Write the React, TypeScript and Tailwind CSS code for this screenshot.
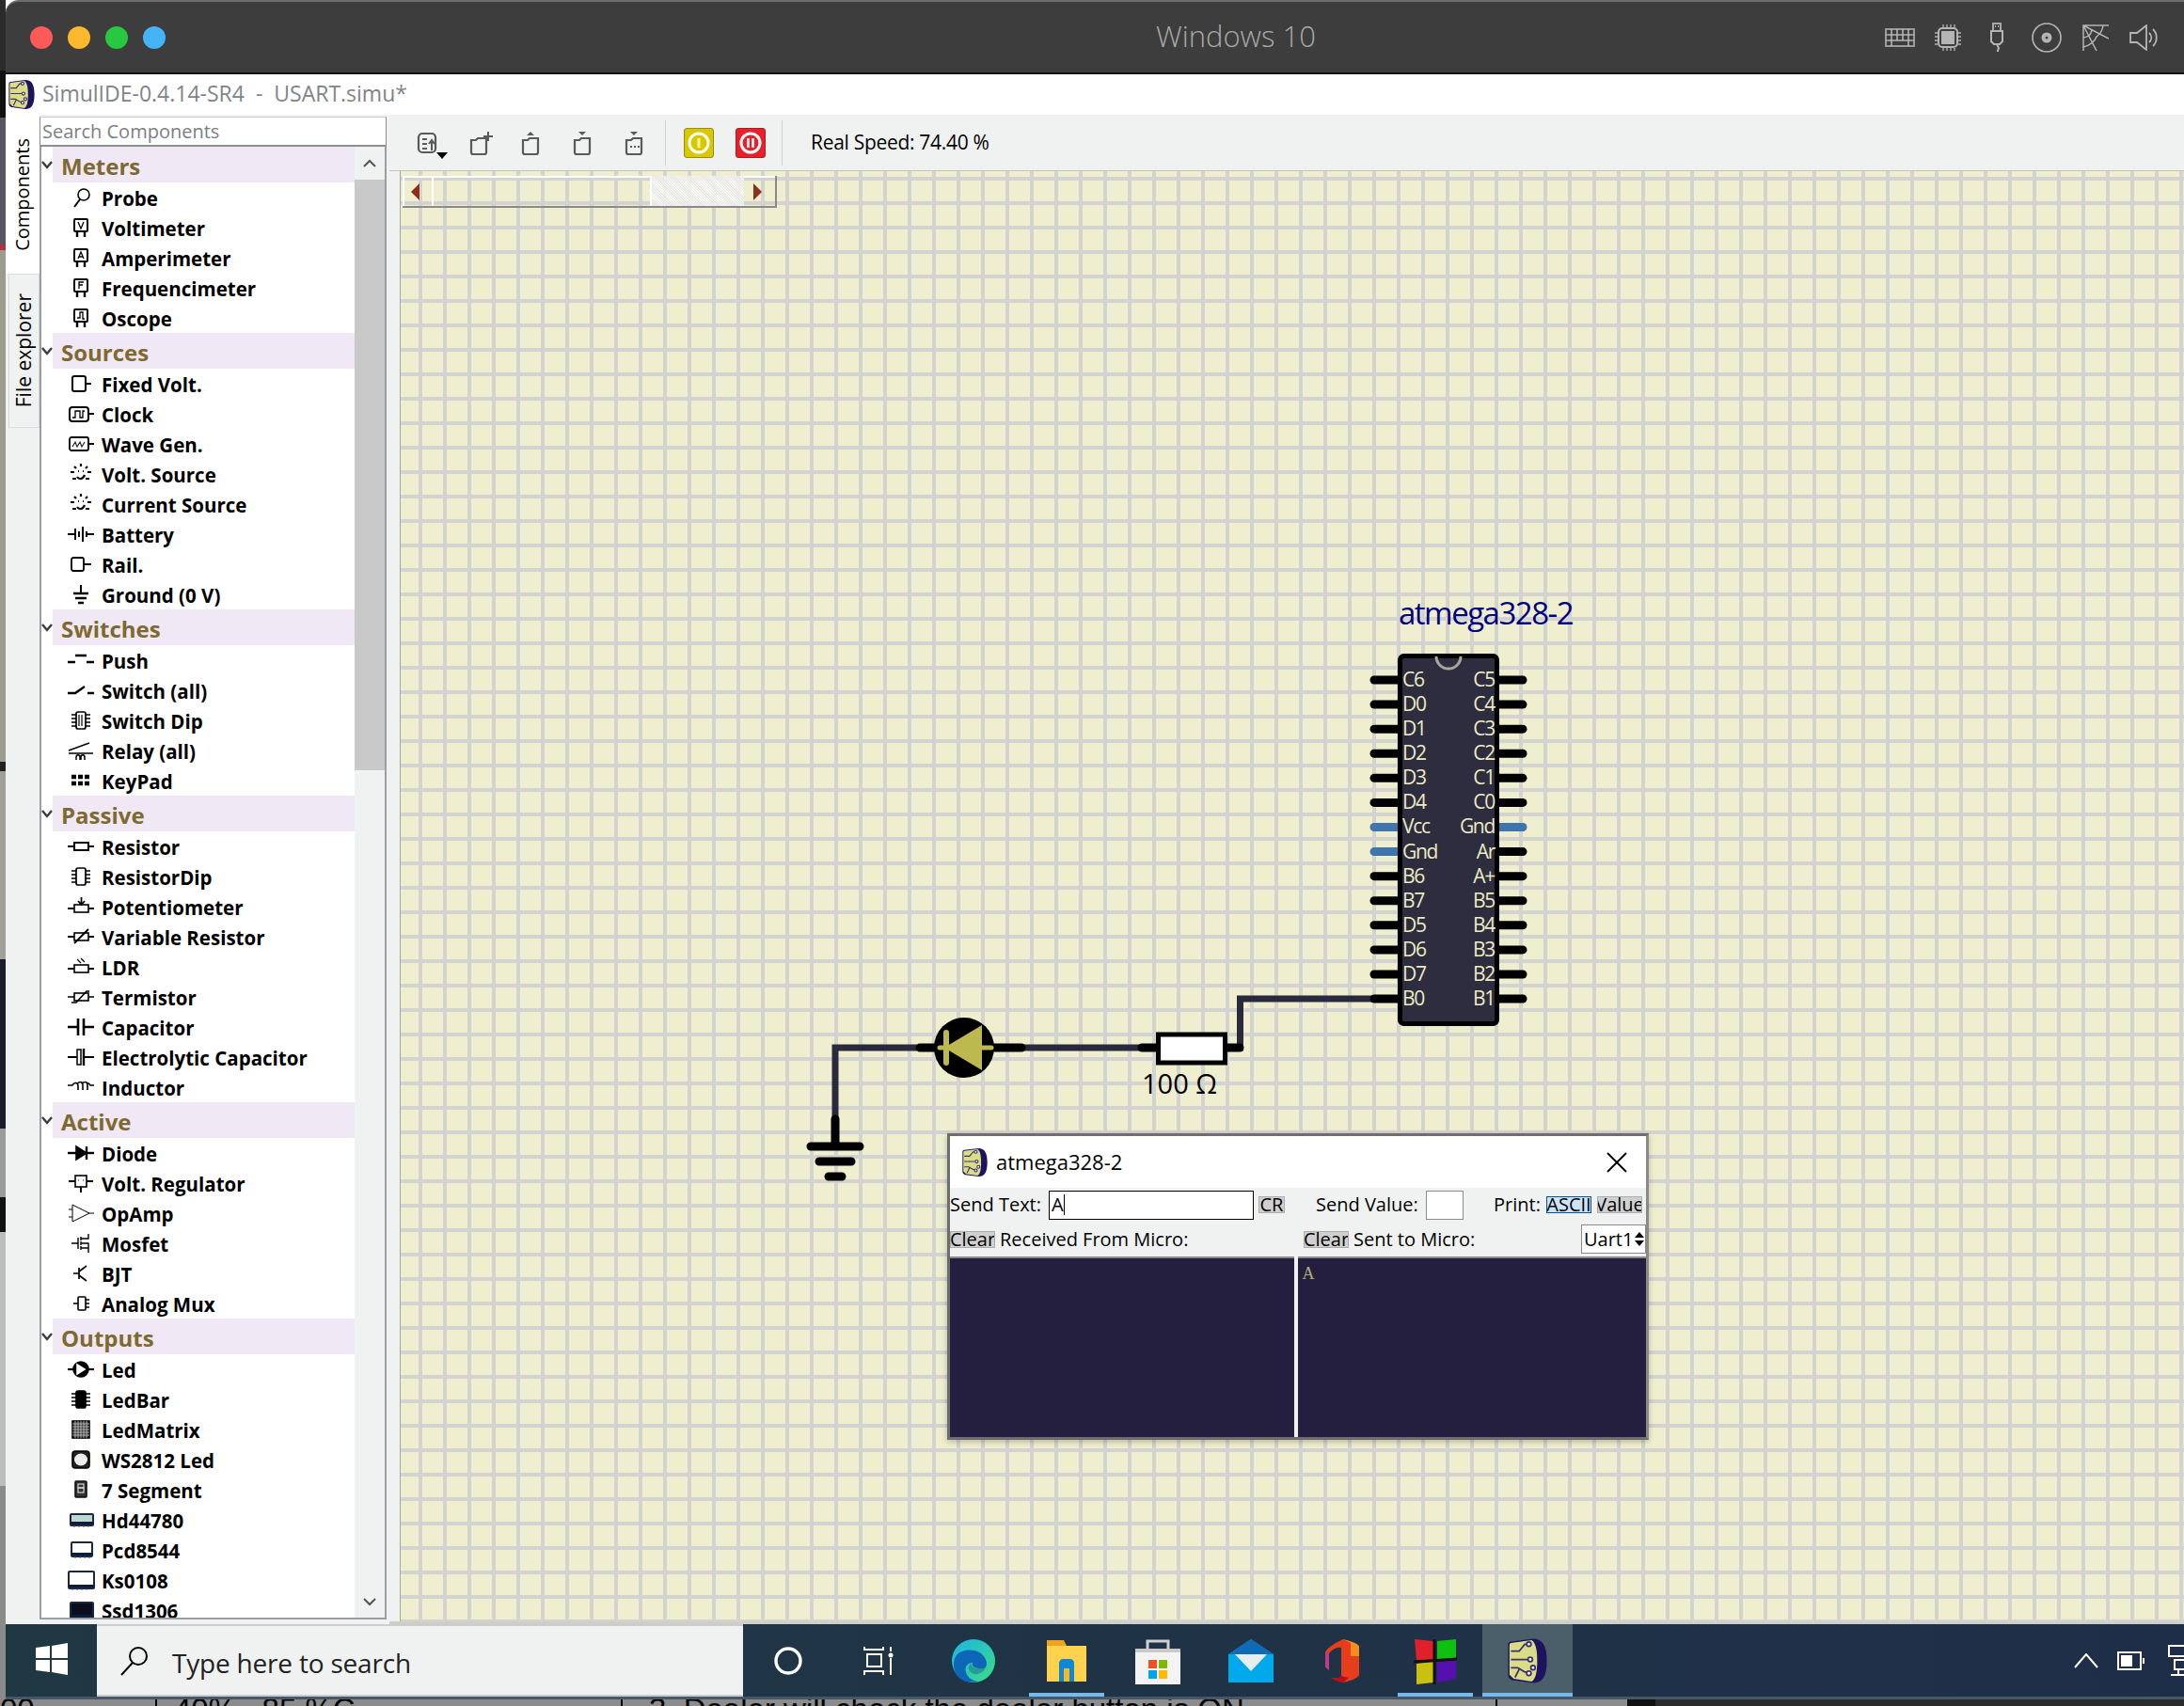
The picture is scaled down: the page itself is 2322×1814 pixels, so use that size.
import React from "react";

const Ico = ({ children, w = 30, h = 22, vb }: { children: React.ReactNode; w?: number; h?: number; vb?: string }) => (
  <svg width={w} height={h} viewBox={vb ?? `0 0 ${w} ${h}`} fill="none" stroke="currentColor" strokeWidth="1.6" className="shrink-0">
    {children}
  </svg>
);

const meter = (l: React.ReactNode) => (
  <Ico>
    <rect x="8" y="2" width="14" height="13" rx="1" strokeWidth="2" />
    <path d="M11 15v6M19 15v6" strokeWidth="2.4" />
    {l}
  </Ico>
);
const pt = (d: string, sw = 1.3) => <path d={d} strokeWidth={sw} />;
const source = (
  <Ico>
    <path d="M8 3l2 2M22 3l-2 2M15 0v3M4 9h4M22 9h4M6 16h4M20 16h4M11 14c2 3 6 3 8-2M12 8h1M17 8h1" strokeWidth="2.2" />
  </Ico>
);
const dip = (inner: React.ReactNode, filled = false) => (
  <Ico>
    <rect x="10" y="2" width="10" height="18" rx="2" fill={filled ? "#000" : "none"} strokeWidth="1.7" />
    <path d="M5 5h5M5 9h5M5 13h5M5 17h5M20 5h5M20 9h5M20 13h5M20 17h5" strokeWidth="1.7" />
    {inner}
  </Ico>
);
const lcd = (fill: string, x = 4, w = 24, y = 4, h = 14) => (
  <Ico>
    <rect x={x} y={y} width={w} height={h} rx="1" fill={fill} stroke="#1c2740" strokeWidth="2" />
    <path d={`M${x} ${y + h - 2.5}h${w}`} stroke="#0d1c3c" strokeWidth="3" />
    <path d={`M${x + 4} ${y + h}v2M${x + 9} ${y + h}v2M${x + 14} ${y + h}v2M${x + 19} ${y + h}v2`} stroke="#555" strokeWidth="1" />
  </Ico>
);

const icons: Record<string, React.ReactNode> = {
  Probe: (
    <Ico>
      <circle cx="18" cy="8" r="6" strokeWidth="1.6" />
      <path d="M14 13L8 21" strokeWidth="2" />
    </Ico>
  ),
  Voltimeter: meter(pt("M12 5l3 7 3-7")),
  Amperimeter: meter(pt("M12 12l3-7 3 7M13 10h4")),
  Frequencimeter: meter(pt("M13 12V5h5M13 8h4")),
  Oscope: meter(pt("M11 11h3V5h3v7h2")),
  "Fixed Volt.": (
    <Ico>
      <rect x="6" y="3" width="14" height="16" rx="2" strokeWidth="2" />
      <path d="M20 11h6" strokeWidth="2" />
    </Ico>
  ),
  Clock: (
    <Ico>
      <rect x="3" y="4" width="20" height="15" rx="3" strokeWidth="2" />
      <path d="M6 15h3V8h5v7h3V8h2" strokeWidth="1.3" />
      <path d="M23 11h6" strokeWidth="2" />
    </Ico>
  ),
  "Wave Gen.": (
    <Ico>
      <rect x="3" y="4" width="20" height="14" rx="2" strokeWidth="1.8" />
      <path d="M6 14l3-5 2 5 3-5 2 5 3-5" strokeWidth="1.2" stroke="#223" />
      <path d="M23 11h6" strokeWidth="2" />
    </Ico>
  ),
  "Volt. Source": source,
  "Current Source": source,
  Battery: (
    <Ico>
      <path d="M1 11h8M9 5v12M13 8v6M17 3v16M21 8v6M21 11h8" strokeWidth="2" />
    </Ico>
  ),
  "Rail.": (
    <Ico>
      <rect x="5" y="4" width="13" height="14" rx="2" strokeWidth="1.8" />
      <path d="M18 11h8" strokeWidth="2" />
    </Ico>
  ),
  "Ground (0 V)": (
    <Ico>
      <path d="M15 1v9" strokeWidth="2" />
      <path d="M7 10h16M9 15h12M12 20h6" strokeWidth="2.4" />
    </Ico>
  ),
  Push: (
    <Ico>
      <path d="M1 13h8M21 13h8M9 6h12" strokeWidth="2.4" />
    </Ico>
  ),
  "Switch (all)": (
    <Ico>
      <path d="M1 14h8L19 7M22 14h7" strokeWidth="2.4" />
    </Ico>
  ),
  "Switch Dip": dip(<path d="M13 5v12M16 5v12" strokeWidth="1.2" />),
  "Relay (all)": (
    <Ico>
      <path d="M2 11L24 3M2 14h26M10 21v-3c0-3 4-3 4 0v3M15 21v-3c0-3 4-3 4 0v3" strokeWidth="1.5" />
    </Ico>
  ),
  KeyPad: (
    <Ico>
      <path d="M5 7h5M12 7h5M19 7h5M5 14h5M12 14h5M19 14h5" strokeWidth="4.5" />
    </Ico>
  ),
  Resistor: (
    <Ico>
      <rect x="8" y="7" width="15" height="8" strokeWidth="2" />
      <path d="M1 11h7M23 11h6" strokeWidth="2.2" />
    </Ico>
  ),
  ResistorDip: dip(null),
  Potentiometer: (
    <Ico>
      <rect x="8" y="9" width="15" height="8" strokeWidth="1.6" />
      <path d="M1 13h7M23 13h6M15.5 1v8M12 5l3.5 4 3.5-4" strokeWidth="1.8" />
    </Ico>
  ),
  "Variable Resistor": (
    <Ico>
      <rect x="8" y="7" width="15" height="8" strokeWidth="1.6" />
      <path d="M1 11h7M23 11h6M8 18L23 3" strokeWidth="1.8" />
    </Ico>
  ),
  LDR: (
    <Ico>
      <rect x="8" y="9" width="15" height="8" strokeWidth="1.6" />
      <path d="M1 13h7M23 13h6" strokeWidth="2" />
      <path d="M11 3l4 4M15 2l4 4" strokeWidth="1.2" />
    </Ico>
  ),
  Termistor: (
    <Ico>
      <rect x="8" y="7" width="15" height="8" strokeWidth="1.6" />
      <path d="M1 11h7M23 11h6M5 17h5L21 5h3" strokeWidth="1.7" />
    </Ico>
  ),
  Capacitor: (
    <Ico>
      <path d="M1 11h11M18 11h11M12 2v18M18 2v18" strokeWidth="2.6" />
    </Ico>
  ),
  "Electrolytic Capacitor": (
    <Ico>
      <path d="M1 11h10M19 11h10" strokeWidth="2" />
      <rect x="11" y="3" width="4" height="16" fill="#fff" strokeWidth="1.5" />
      <path d="M18 2v18" strokeWidth="2.4" />
    </Ico>
  ),
  Inductor: (
    <Ico>
      <path d="M1 9h5c2-4 6-3 6 1v4M11 8c2-4 6-3 6 1v5M16 8c2-4 6-3 6 1v5M21 7c1-1 3 0 4 2h4" strokeWidth="1.6" />
    </Ico>
  ),
  Diode: (
    <Ico>
      <path d="M1 11h28" strokeWidth="2.4" />
      <path d="M10 4l11 7-11 7z" fill="currentColor" />
      <path d="M21 4v14" strokeWidth="2.4" />
    </Ico>
  ),
  "Volt. Regulator": (
    <Ico>
      <rect x="9" y="3" width="12" height="12" strokeWidth="1.6" />
      <path d="M2 9h7M21 9h7M15 15v6" strokeWidth="2" />
      <path d="M12 8h1M17 8h1" strokeWidth="1" />
    </Ico>
  ),
  OpAmp: (
    <Ico>
      <path d="M6 2l18 9-18 9zM2 7h4M2 15h4M24 11h5" strokeWidth="1" />
    </Ico>
  ),
  Mosfet: (
    <Ico>
      <path d="M5 11h7M12 5v12M15 4v4M15 9v4M15 14v4M15 6h8V1M15 16h8v5M15 11h8v5" strokeWidth="1.4" />
    </Ico>
  ),
  BJT: (
    <Ico>
      <path d="M7 11h6M13 5v12M13 9l8-6M13 13l8 6" strokeWidth="1.7" />
    </Ico>
  ),
  "Analog Mux": (
    <Ico>
      <path d="M7 11h5" strokeWidth="1.6" />
      <rect x="12" y="4" width="8" height="14" rx="1" strokeWidth="1.6" />
      <path d="M20 7h4M20 11h4M20 15h4" strokeWidth="1.4" />
    </Ico>
  ),
  Led: (
    <Ico>
      <circle cx="15" cy="11" r="8" fill="currentColor" />
      <path d="M1 11h28" strokeWidth="2.2" />
      <path d="M11 6l8 5-8 5z" fill="#fff" stroke="#fff" />
    </Ico>
  ),
  LedBar: dip(null, true),
  LedMatrix: (
    <Ico>
      <rect x="6" y="2" width="18" height="18" fill="#333" stroke="#000" />
      <path d="M9 2v18M12 2v18M15 2v18M18 2v18M21 2v18M6 5h18M6 8h18M6 11h18M6 14h18M6 17h18" stroke="#ccc" strokeWidth="0.8" />
    </Ico>
  ),
  "WS2812 Led": (
    <Ico>
      <rect x="6" y="2" width="18" height="18" rx="3" fill="#222" stroke="#000" />
      <ellipse cx="15" cy="11" rx="7" ry="6.5" fill="#ededed" stroke="none" />
    </Ico>
  ),
  "7 Segment": (
    <Ico>
      <rect x="9" y="2" width="12" height="17" rx="1" fill="#333" stroke="#111" />
      <rect x="12" y="5" width="6" height="4" stroke="#ddd" strokeWidth="1.1" />
      <rect x="12" y="9" width="6" height="5" stroke="#ddd" strokeWidth="1.1" />
    </Ico>
  ),
  Hd44780: lcd("#bcd8d0", 4, 24, 5, 12),
  Pcd8544: lcd("#fff", 5, 22, 3, 15),
  Ks0108: lcd("#fff", 2, 27, 2, 18),
  Ssd1306: lcd("#0d0d20", 4, 24, 3, 17),
};

const tree: { name: string; items: string[] }[] = [
  { name: "Meters", items: ["Probe", "Voltimeter", "Amperimeter", "Frequencimeter", "Oscope"] },
  { name: "Sources", items: ["Fixed Volt.", "Clock", "Wave Gen.", "Volt. Source", "Current Source", "Battery", "Rail.", "Ground (0 V)"] },
  { name: "Switches", items: ["Push", "Switch (all)", "Switch Dip", "Relay (all)", "KeyPad"] },
  { name: "Passive", items: ["Resistor", "ResistorDip", "Potentiometer", "Variable Resistor", "LDR", "Termistor", "Capacitor", "Electrolytic Capacitor", "Inductor"] },
  { name: "Active", items: ["Diode", "Volt. Regulator", "OpAmp", "Mosfet", "BJT", "Analog Mux"] },
  { name: "Outputs", items: ["Led", "LedBar", "LedMatrix", "WS2812 Led", "7 Segment", "Hd44780", "Pcd8544", "Ks0108", "Ssd1306"] },
];

const AppIcon = ({ w = 30, h = 34 }: { w?: number; h?: number }) => (
  <svg width={w} height={h} viewBox="0 0 30 34" className="shrink-0">
    <path d="M3 3l16-2c7 0 10 5 10 16s-3 16-10 16L4 31c-2-1-3-2-3-4V5c0-1 1-2 2-2z" fill="#1d1460" />
    <path d="M3 4l15-2c3 2 4 7 4 15s-1 13-4 15L5 30l-3-3V5z" fill="#dbdc86" />
    <g stroke="#3b3070" strokeWidth="1.2" fill="#fff">
      <path d="M3 10h6l4-5h2M3 16h12M3 22l5 0 5 3h3M6 29l3-6" fill="none" />
      <circle cx="16" cy="5" r="1.6" />
      <circle cx="17" cy="16" r="1.6" />
      <circle cx="19" cy="22" r="1.6" />
      <circle cx="16" cy="26" r="1.6" />
    </g>
  </svg>
);

const Chevron = () => (
  <svg width="12" height="10" viewBox="0 0 12 10" className="shrink-0">
    <path d="M1 2l5 6 5-6" fill="none" stroke="#3b3b3b" strokeWidth="2.4" />
  </svg>
);

const Sidebar = () => (
  <div className="w-[408px] shrink-0 flex bg-[#f0f2f1] pb-[5px]">
    <div className="w-[36px] shrink-0 flex flex-col">
      <div className="h-[169px] bg-white flex items-center justify-center">
        <span className="[writing-mode:vertical-rl] rotate-180 text-[20px] leading-none text-black font-['Open_Sans',sans-serif]">Components</span>
      </div>
      <div className="h-[164px] ml-[3px] border border-[#d9dbda] flex items-center justify-center">
        <span className="[writing-mode:vertical-rl] rotate-180 text-[21px] leading-none text-black font-['Open_Sans',sans-serif]">File explorer</span>
      </div>
    </div>
    <div className="w-[369px] flex flex-col pt-[2px]">
      <div className="h-[32px] shrink-0 bg-white border-x border-t border-b-2 border-[#8d8f90] border-t-[#c9c9c9] px-[2px] flex items-center text-[20px] text-[#7b7f82] font-['Open_Sans',sans-serif]">
        Search Components
      </div>
      <div className="flex-1 min-h-0 flex border-x-2 border-b-2 border-[#9a9da3] bg-white overflow-hidden">
        <div className="w-[333px] shrink-0 overflow-hidden font-['Open_Sans',sans-serif]">
          {tree.map((g) => (
            <div key={g.name}>
              <div className="h-[38px] flex items-center">
                <div className="w-[12px] flex justify-center">
                  <Chevron />
                </div>
                <div className="w-[321px] h-full bg-[#f0e8f4] pl-[9px] pt-[3px] flex items-center text-[24px] leading-none font-bold text-[#7e6a30]">{g.name}</div>
              </div>
              {g.items.map((it) => (
                <div key={it} className="h-8 flex items-center pl-[27px] gap-[7px] text-[20.5px] leading-none font-bold text-black">
                  <span className="flex w-[30px] justify-center text-black">{icons[it]}</span>
                  <span className="pt-[2px]">{it}</span>
                </div>
              ))}
            </div>
          ))}
        </div>
        <div className="flex-1 flex flex-col bg-[#f0f2f1]">
          <div className="h-[35px] flex items-center justify-center shrink-0">
            <svg width="14" height="10" viewBox="0 0 14 10">
              <path d="M1 8l6-6 6 6" fill="none" stroke="#555" strokeWidth="2" />
            </svg>
          </div>
          <div className="h-[628px] bg-[#c9c9c9] shrink-0" />
          <div className="flex-1 flex items-end justify-center pb-[12px]">
            <svg width="14" height="10" viewBox="0 0 14 10">
              <path d="M1 2l6 6 6-6" fill="none" stroke="#555" strokeWidth="2" />
            </svg>
          </div>
        </div>
      </div>
    </div>
  </div>
);

const ToolIcon = ({ children }: { children: React.ReactNode }) => (
  <svg width="30" height="32" viewBox="0 0 30 32" fill="none" stroke="#5a5a5a" strokeWidth="2.2" className="shrink-0">
    {children}
  </svg>
);

const folder = "M7 13h5l2-2h9v15a2 2 0 0 1-2 2H9a2 2 0 0 1-2-2z";

const PowerBtn = ({ red }: { red?: boolean }) => (
  <div className={`w-[32px] h-[32px] rounded-[3px] flex items-center justify-center border ${red ? "bg-[#e8202c] border-[#b01a24]" : "bg-[#d8c800] border-[#9a8c10]"}`}>
    <svg width="26" height="26" viewBox="0 0 26 26" fill="none" stroke="#fff" strokeWidth="3">
      <circle cx="13" cy="13" r="10" />
      {red ? <path d="M10.5 8v10M15.5 8v10" strokeWidth="2.6" /> : <path d="M13 8v10" stroke="#fff6a0" strokeWidth="3" />}
    </svg>
  </div>
);

const Toolbar = () => (
  <div className="h-[60px] shrink-0 bg-[#f0f2f1] flex items-center pl-[26px] border-b border-[#c4c4b8]">
    <div className="relative w-[44px]">
      <ToolIcon>
        <rect x="5" y="6" width="18" height="20" rx="4" />
        <path d="M9 12h5M9 17h5M9 22h5" strokeWidth="1.8" />
        <path d="M19 24v-9M16 17l3-4 3 4" strokeWidth="2" />
      </ToolIcon>
      <svg width="14" height="8" viewBox="0 0 14 8" className="absolute left-[23px] top-[26px]">
        <path d="M1 0h12L7 7z" fill="#000" />
      </svg>
    </div>
    <div className="flex gap-[25px] ml-[10px]">
      <ToolIcon>
        <path d={folder} />
        <path d="M25 4v10M20 9h10" strokeWidth="2" />
      </ToolIcon>
      <ToolIcon>
        <path d={folder} />
        <path d="M11 8l4-4 4 4z" fill="#5a5a5a" stroke="none" />
      </ToolIcon>
      <ToolIcon>
        <path d={folder} />
        <path d="M11 4l4 4 4-4z" fill="#5a5a5a" stroke="none" />
      </ToolIcon>
      <ToolIcon>
        <path d={folder} />
        <path d="M11 4l4 4 4-4z" fill="#5a5a5a" stroke="none" />
        <path d="M11 20h2M15 20h2M19 20h2" strokeWidth="2.2" />
      </ToolIcon>
    </div>
    <div className="w-px h-[48px] bg-[#cfd0cf] ml-[18px]" />
    <div className="ml-[19px] flex gap-[23px]">
      <PowerBtn />
      <PowerBtn red />
    </div>
    <div className="w-px h-[48px] bg-[#cfd0cf] ml-[17px]" />
    <span className="ml-[30px] text-[21px] text-black font-['Open_Sans',sans-serif] tracking-[-0.3px]">Real Speed: 74.40 %</span>
  </div>
);

const leftPins = ["C6", "D0", "D1", "D2", "D3", "D4", "Vcc", "Gnd", "B6", "B7", "D5", "D6", "D7", "B0"];
const rightPins = ["C5", "C4", "C3", "C2", "C1", "C0", "Gnd", "Ar", "A+", "B5", "B4", "B3", "B2", "B1"];

const Schematic = () => (
  <svg className="absolute inset-0" width="1897" height="1543" viewBox="426 182 1897 1543" fill="none">
    <path d="M1460 1062H1318.5V1114H1308M1212 1114H1060M975 1114H888V1195" stroke="#2a2a3e" strokeWidth="7" strokeLinejoin="miter" />
    <path d="M888 1190v26" stroke="#000" strokeWidth="9" strokeLinecap="round" />
    <path d="M862 1219h52M871 1235h34M881 1251h14" stroke="#000" strokeWidth="9" strokeLinecap="round" />
    <path d="M978 1114h20M1052 1114h34" stroke="#000" strokeWidth="9" strokeLinecap="round" />
    <circle cx="1025" cy="1114" r="32" fill="#000" />
    <path d="M1004 1114l40-24v48z" fill="#bcb94e" />
    <path d="M999 1114h55" stroke="#bcb94e" strokeWidth="5" strokeLinecap="round" />
    <path d="M1006 1098v32" stroke="#bcb94e" strokeWidth="6" strokeLinecap="round" />
    <path d="M1214 1114h16M1304 1114h14" stroke="#000" strokeWidth="9" strokeLinecap="round" />
    <rect x="1231.5" y="1100" width="71" height="30" fill="#fff" stroke="#000" strokeWidth="5" />
    <text x="1214" y="1163" fill="#000" fontSize="29" fontFamily="'Open Sans',sans-serif">100 Ω</text>
    <text x="1487" y="664" fill="#000080" fontSize="33" letterSpacing="-1.5" fontFamily="'Open Sans',sans-serif">atmega328-2</text>
    {leftPins.map((p, i) => (
      <path key={"l" + i} d={`M1461 ${723 + i * 26.08}h26`} stroke={p === "Vcc" || p === "Gnd" ? "#3f74ad" : "#000"} strokeWidth="9" strokeLinecap="round" />
    ))}
    {rightPins.map((p, i) => (
      <path key={"r" + i} d={`M1593 ${723 + i * 26.08}h26`} stroke={p === "Gnd" ? "#3f74ad" : "#000"} strokeWidth="9" strokeLinecap="round" />
    ))}
    <rect x="1488.5" y="697.5" width="103" height="391" rx="4" fill="#2e2d40" stroke="#000" strokeWidth="5" />
    <path d="M1527 698a13 13 0 0 0 26 0" stroke="#a8a79c" strokeWidth="3" />
    {leftPins.map((p, i) => (
      <text key={p + i} x="1491" y={730 + i * 26.08} fill="#ecebc0" fontSize="21" letterSpacing="-1.3" fontFamily="'Open Sans',sans-serif">{p}</text>
    ))}
    {rightPins.map((p, i) => (
      <text key={p + i} x="1589" y={730 + i * 26.08} textAnchor="end" fill="#ecebc0" fontSize="21" letterSpacing="-1.3" fontFamily="'Open Sans',sans-serif">{p}</text>
    ))}
  </svg>
);

const HScroll = () => (
  <div className="absolute left-[2px] top-[5px] w-[398px] h-[34px] flex border-r-2 border-b-2 border-[#8a8a8a]">
    <div className="w-[33px] border-t-2 border-l-2 border-r-2 border-[#fff] flex items-center justify-center pr-[5px]">
      <svg width="10" height="18" viewBox="0 0 10 18">
        <path d="M9 0v18L0 9z" fill="#8c2f1b" />
      </svg>
    </div>
    <div className="w-[232px] border-t-2 border-[#fff] border-r-2" />
    <div className="w-[98px] bg-[#ffffff]/70 bg-[repeating-linear-gradient(45deg,#e8e8e8_0,#e8e8e8_1px,transparent_1px,transparent_2px)]" />
    <div className="flex-1 border-t-2 border-[#fff] flex items-center justify-center pr-[5px]">
      <svg width="10" height="18" viewBox="0 0 10 18">
        <path d="M1 0v18L10 9z" fill="#8c2f1b" />
      </svg>
    </div>
  </div>
);

const MiniBtn = ({ w, label, active }: { w: string; label: string; active?: boolean }) => (
  <div className={`${w} h-[18px] shrink-0 overflow-hidden flex items-center justify-center border text-[20px] leading-none ${active ? "bg-[#cce4f7] border-[#005499]" : "bg-[#d0d0d0] border-[#adadad]"}`}>
    <span className="whitespace-nowrap">{label}</span>
  </div>
);

const Dialog = () => (
  <div className="absolute left-[581px] top-[1023px] w-[746px] h-[326px] bg-[#f0f2f1] border-[3px] border-[#6e6e6e] border-r-[#8a8a8a] flex flex-col font-['Open_Sans',sans-serif] text-black shadow-[0_2px_6px_rgba(0,0,0,0.25)]">
    <div className="h-[55px] shrink-0 bg-white flex items-center pl-[12px] pr-[20px]">
      <AppIcon w={29} h={32} />
      <span className="ml-[8px] text-[22px]">atmega328-2</span>
      <svg className="ml-auto" width="22" height="22" viewBox="0 0 22 22">
        <path d="M1 1l20 20M21 1L1 21" stroke="#000" strokeWidth="1.8" />
      </svg>
    </div>
    <div className="h-[36px] shrink-0 flex items-center text-[20px]">
      <span className="w-[105px]">Send Text:</span>
      <div className="w-[218px] h-[31px] bg-white border border-black pl-[2px] flex items-center">
        A<span className="w-px h-[22px] bg-black" />
      </div>
      <div className="ml-[5px]">
        <MiniBtn w="w-[28px]" label="CR" />
      </div>
      <span className="ml-[33px] w-[117px] whitespace-nowrap">Send Value:</span>
      <div className="w-[40px] h-[31px] bg-white border border-[#8a8a8a]" />
      <span className="ml-[32px] w-[56px]">Print:</span>
      <MiniBtn w="w-[48px]" label="ASCII" active />
      <div className="ml-[6px]">
        <MiniBtn w="w-[48px]" label="Value" />
      </div>
    </div>
    <div className="h-[37px] shrink-0 flex items-center text-[20px]">
      <MiniBtn w="w-[48px]" label="Clear" />
      <span className="ml-[5px] w-[323px]">Received From Micro:</span>
      <MiniBtn w="w-[48px]" label="Clear" />
      <span className="ml-[5px]">Sent to Micro:</span>
      <div className="ml-auto w-[69px] h-[31px] bg-white border border-[#8a8a8a] flex items-center pl-[2px] overflow-hidden">
        <span className="w-[52px] shrink-0 overflow-hidden">Uart1</span>
        <div className="flex flex-col gap-[3px] w-[14px] items-center">
          <svg width="10" height="6" viewBox="0 0 10 6"><path d="M5 0l5 6H0z" fill="#000" /></svg>
          <svg width="10" height="6" viewBox="0 0 10 6"><path d="M0 0h10L5 6z" fill="#000" /></svg>
        </div>
      </div>
    </div>
    <div className="flex-1 flex gap-[4px]">
      <div className="flex-1 bg-[#241f3f] border-t-2 border-[#8a8a8a]" />
      <div className="flex-1 bg-[#241f3f] border-t-2 border-[#8a8a8a] pl-[5px] pt-[4px] text-[18px] leading-[24px] text-[#b4ac7e] font-['Liberation_Serif',serif]">A</div>
    </div>
  </div>
);

const Canvas = () => (
  <div className="relative flex-1 min-h-0 ml-[11px] overflow-hidden border-l border-[#a8a89a] bg-[#efefcf] bg-[linear-gradient(#d3d3cf_4px,transparent_4px),linear-gradient(90deg,#d3d3cf_4px,transparent_4px)] [background-size:26px_26px] [background-position:19px_6px]">
    <HScroll />
    <Schematic />
    <Dialog />
  </div>
);

const TopIcons = () => (
  <div className="ml-auto pr-[26px] flex items-center text-[#b4b4b4]">
    <svg width="32" height="20" viewBox="0 0 32 20" fill="none" stroke="currentColor" strokeWidth="1.6">
      <rect x="1" y="1" width="30" height="18" />
      <path d="M1 7h30M1 13h30M7 1v12M13 1v12M19 1v12M25 1v18M7 13v6" />
    </svg>
    <svg className="ml-[21px]" width="28" height="28" viewBox="0 0 28 28" fill="none" stroke="currentColor">
      <rect x="4" y="4" width="20" height="20" rx="4" strokeWidth="2" />
      <rect x="7" y="7" width="14" height="14" fill="currentColor" stroke="none" />
      <path d="M9 0v3M13 0v3M17 0v3M21 0v3M9 25v3M13 25v3M17 25v3M21 25v3M0 9h3M0 13h3M0 17h3M0 21h3M25 9h3M25 13h3M25 17h3M25 21h3" strokeWidth="1.3" />
    </svg>
    <svg className="ml-[31px]" width="14" height="32" viewBox="0 0 14 32" fill="none" stroke="currentColor" strokeWidth="1.8">
      <rect x="3" y="1" width="8" height="8" />
      <path d="M5 4h1M8 4h1" />
      <path d="M1 9h12v11l-3 3H4l-3-3zM7 23l2 4-1 3v1" strokeWidth="2" />
    </svg>
    <svg className="ml-[30px]" width="32" height="32" viewBox="0 0 32 32" fill="none" stroke="currentColor" strokeWidth="1.6">
      <circle cx="16" cy="16" r="15" />
      <circle cx="16" cy="16" r="3.5" strokeWidth="4" />
    </svg>
    <svg className="ml-[22px]" width="28" height="28" viewBox="0 0 28 28" fill="none" stroke="currentColor" strokeWidth="1.5">
      <path d="M1 28V1h27M1 1l14 27M1 1l27 14M1 14c6-1 8-3 9-8M1 24c8-2 12-6 14-11 3-2 6-5 7-12" />
    </svg>
    <svg className="ml-[22px]" width="32" height="28" viewBox="0 0 32 28" fill="none" stroke="currentColor" strokeWidth="1.8">
      <path d="M1 9h7l10-8v26L8 19H1z" />
      <path d="M21 9c3 3 3 7 0 10M25 5c5 5 5 13 0 18" />
    </svg>
  </div>
);

const TaskIcon = ({ children, className }: { children: React.ReactNode; className: string }) => (
  <div className={`h-full flex items-center justify-center shrink-0 ${className}`}>{children}</div>
);

const Taskbar = () => (
  <div className="h-[80px] shrink-0 flex bg-linear-to-r from-[#203843] to-[#1e2e48] border-b-[3px] border-[#45586a]">
    <div className="w-[97px] shrink-0 flex items-center justify-center pb-[4px]">
      <svg width="34" height="34" viewBox="0 0 34 34">
        <path d="M0 5l15-2v13H0zM17 3l17-3v16H17zM0 18h15v13l-15-2zM17 18h17v16l-17-3z" fill="#fff" />
      </svg>
    </div>
    <div className="w-[687px] shrink-0 h-full bg-[#f0f2f1] border-t-2 border-b-2 border-[#cccccc] flex items-center">
      <svg className="ml-[24px]" width="32" height="32" viewBox="0 0 32 32" fill="none" stroke="#000" strokeWidth="2">
        <circle cx="20" cy="11" r="9" />
        <path d="M14 18L2 31" />
      </svg>
      <span className="ml-[24px] pt-[5px] text-[28px] leading-none text-[#222] font-['Open_Sans',sans-serif] tracking-[-0.2px]">Type here to search</span>
    </div>
    <TaskIcon className="w-[96px]">
      <svg width="32" height="32" viewBox="0 0 32 32"><circle cx="16" cy="16" r="13" fill="none" stroke="#fff" strokeWidth="3.4" /></svg>
    </TaskIcon>
    <TaskIcon className="w-[96px]">
      <svg width="32" height="32" viewBox="0 0 32 32" fill="none" stroke="#fff" strokeWidth="2">
        <path d="M1 1v3h20V1M4 9h15v13H4zM1 31v-4h20v4M29 1v5M29 13v18" />
        <circle cx="29" cy="10" r="2.5" fill="#fff" stroke="none" />
      </svg>
    </TaskIcon>
    <TaskIcon className="w-[106px]">
      <svg width="48" height="48" viewBox="0 0 48 48">
        <defs>
          <linearGradient id="edgeA" x1="0" y1="0" x2="1" y2="1"><stop offset="0" stopColor="#1cb4e8" /><stop offset="1" stopColor="#3ddc84" /></linearGradient>
        </defs>
        <circle cx="24" cy="24" r="23" fill="url(#edgeA)" />
        <path d="M3 28C3 14 15 11 25 13c9 2 13 9 13 14 0 4-4 6-9 5-5-1-7-3-6-6-5 0-9 4-7 10 1 5 6 9 13 10C12 49 3 40 3 28z" fill="#0d66b8" />
        <path d="M22 26c-1 3 1 5 6 6 5 1 9-1 10-4-1 7-8 11-13 10-7-2-8-8-3-12z" fill="#1b3a6e" opacity="0.35" />
      </svg>
    </TaskIcon>
    <TaskIcon className="w-[92px] relative">
      <svg width="44" height="48" viewBox="0 0 44 48">
        <path d="M1 8V2h18l3 6z" fill="#eda41c" />
        <path d="M1 8h42v38H1z" fill="#ffd24d" />
        <path d="M14 46V26c0-2 2-4 4-4h8c2 0 4 2 4 4v20h-5V32h-6v14z" fill="#0f86d6" />
        <path d="M19 32h6v14h-6z" fill="#f9b815" />
      </svg>
      <span className="absolute left-[6px] right-[6px] bottom-0 h-[4px] bg-[#76b9ed]" />
    </TaskIcon>
    <TaskIcon className="w-[102px]">
      <svg width="48" height="50" viewBox="0 0 48 50">
        <path d="M13 14V4h22v10" fill="none" stroke="#cfcfcf" strokeWidth="3" />
        <path d="M0 12h48v38H0z" fill="#f3f3f3" />
        <path d="M0 12h48v4H0z" fill="#c9c9c9" />
        <path d="M14 24h9v9h-9z" fill="#f25022" /><path d="M25 24h9v9h-9z" fill="#7fba00" /><path d="M14 35h9v9h-9z" fill="#00a4ef" /><path d="M25 35h9v9h-9z" fill="#ffb900" />
      </svg>
    </TaskIcon>
    <TaskIcon className="w-[96px]">
      <svg width="48" height="46" viewBox="0 0 48 46">
        <path d="M0 16L24 0l24 16v30H0z" fill="#00a8ec" />
        <path d="M0 16L24 0l24 16-24 0z" fill="#0f6ab8" />
        <path d="M7 16h34L24 34z" fill="#e8eef0" />
      </svg>
    </TaskIcon>
    <TaskIcon className="w-[98px]">
      <svg width="38" height="48" viewBox="0 0 38 48">
        <path d="M20 1c10 3 17 5 17 8v30c-1 3-8 6-17 8-8-2-11-4-13-5 4 1 9 1 11-2V10C14 9 8 12 5 16v18c-2-3-4-2-4-5V15C4 9 12 5 20 1z" fill="#e63d1c" />
        <path d="M5 16v18c-2-3-4-2-4-5V15z" fill="#c3398e" />
        <path d="M20 1c10 3 17 5 17 8v10H28V5z" fill="#f48e1c" />
        <path d="M7 42c4 1 9 1 11-2l8 2-6 5c-8-2-11-4-13-5z" fill="#bb0c20" />
      </svg>
    </TaskIcon>
    <TaskIcon className="w-[100px] relative">
      <svg width="46" height="50" viewBox="0 0 46 50">
        <path d="M1 2l20 2v20H3z" fill="#e0202a" /><path d="M25 4l20-2v20l-20 2z" fill="#10c010" />
        <path d="M3 28l18-2v22L3 50z" fill="#c9c010" /><path d="M25 26l20-2v20l-20 4z" fill="#5510b0" />
        <path d="M22 2v48M0 26l46-3" stroke="#111" strokeWidth="3" />
      </svg>
      <span className="absolute left-[10px] right-[10px] bottom-0 h-[4px] bg-[#76b9ed]" />
    </TaskIcon>
    <TaskIcon className="w-[96px] relative bg-[#4b5f6b]">
      <AppIcon w={46} h={50} />
      <span className="absolute left-0 right-0 bottom-0 h-[4px] bg-[#76b9ed]" />
    </TaskIcon>
    <div className="ml-auto flex items-center pr-0 overflow-hidden">
      <svg width="26" height="16" viewBox="0 0 26 16" fill="none" stroke="#fff" strokeWidth="2"><path d="M1 15L13 1l12 14" /></svg>
      <svg className="ml-[20px]" width="30" height="20" viewBox="0 0 30 20" fill="none" stroke="#fff" strokeWidth="2">
        <rect x="1" y="1" width="24" height="18" />
        <rect x="4" y="4" width="12" height="12" fill="#fff" stroke="none" />
        <path d="M28 7v6" />
      </svg>
      <svg className="ml-[24px]" width="17" height="34" viewBox="0 0 17 34" fill="none" stroke="#fff" strokeWidth="2">
        <rect x="1" y="1" width="20" height="11" />
        <rect x="7" y="16" width="20" height="10" />
        <path d="M11 26v6M3 32h14" />
      </svg>
    </div>
  </div>
);

export default function App() {
  return (
    <div className="w-[2322px] h-[1814px] overflow-hidden flex flex-col bg-[#111] font-['Open_Sans',sans-serif]">
      <div className="flex h-[1807px] shrink-0">
        <div className="w-[6px] shrink-0 flex flex-col">
          <div className="h-[75px] bg-[#2b2b2b]" />
          <div className="h-[50px] bg-[#111]" />
          <div className="h-[135px] bg-[#56565f]" />
          <div className="h-[6px] bg-[#b03040]" />
          <div className="h-[544px] bg-[#9c9c8c]" />
          <div className="h-[10px] bg-[#222]" />
          <div className="h-[200px] bg-[#a0a098]" />
          <div className="h-[180px] bg-[#1b1b2e]" />
          <div className="h-[73px] bg-[#9a9a9a]" />
          <div className="h-[37px] bg-[#111]" />
          <div className="h-[270px] bg-[#bcbcbc]" />
          <div className="flex-1 bg-[#8a8a8a]" />
        </div>
        <div className="flex-1 min-w-0 flex flex-col bg-white">
          <div className="h-[79px] shrink-0 bg-[#3d3d3d] rounded-tl-[14px] border-t-2 border-[#6d6d6d] border-b-2 border-b-[#111] flex items-center">
            <div className="w-[1223px] shrink-0 flex items-center gap-[16px] pl-[26px]">
              <span className="w-[24px] h-[24px] rounded-full bg-[#fc5b57]" />
              <span className="w-[24px] h-[24px] rounded-full bg-[#fdb92d]" />
              <span className="w-[24px] h-[24px] rounded-full bg-[#28c840]" />
              <span className="w-[24px] h-[24px] rounded-full bg-[#45b4f6]" />
            </div>
            <span className="pb-[2px] text-[31px] leading-none font-light text-[#a8a8a8] font-['Open_Sans',sans-serif]">Windows 10</span>
            <TopIcons />
          </div>
          <div className="h-[43px] shrink-0 flex items-center pl-[2px] bg-white">
            <AppIcon w={30} h={33} />
            <span className="ml-[7px] pb-[2px] text-[23px] leading-none text-[#7e848a] whitespace-pre font-['Open_Sans',sans-serif]">SimulIDE-0.4.14-SR4  -  USART.simu*</span>
          </div>
          <div className="flex-1 min-h-0 flex">
            <Sidebar />
            <div className="flex-1 min-w-0 flex flex-col bg-[#f0f2f1]">
              <Toolbar />
              <Canvas />
              <div className="h-[3px] shrink-0 bg-[#cfcfca]" />
            </div>
          </div>
          <Taskbar />
        </div>
      </div>
      <div className="h-[7px] shrink-0 flex overflow-hidden text-[33px] leading-[40px] text-black font-['Liberation_Sans',sans-serif] whitespace-pre">
        <div className="w-[165px] shrink-0 bg-[#8c8c8c] overflow-hidden"><span className="block -translate-y-[9px]">00</span></div>
        <div className="w-[495px] shrink-0 bg-[#8c8c8c] border-l-2 border-black pl-[18px] overflow-hidden"><span className="block -translate-y-[9px]">40%   85 %C</span></div>
        <div className="w-[930px] shrink-0 bg-[#8c8c8c] border-l-2 border-black pl-[28px] overflow-hidden"><span className="block -translate-y-[9px]">3. Dealer will check the dealer button is ON.</span></div>
        <div className="w-[140px] shrink-0 bg-[#8c8c8c] border-l-2 border-black" />
        <div className="w-[30px] shrink-0 bg-[#111]" />
        <div className="flex-1 bg-[#2b2b2b]" />
      </div>
    </div>
  );
}
